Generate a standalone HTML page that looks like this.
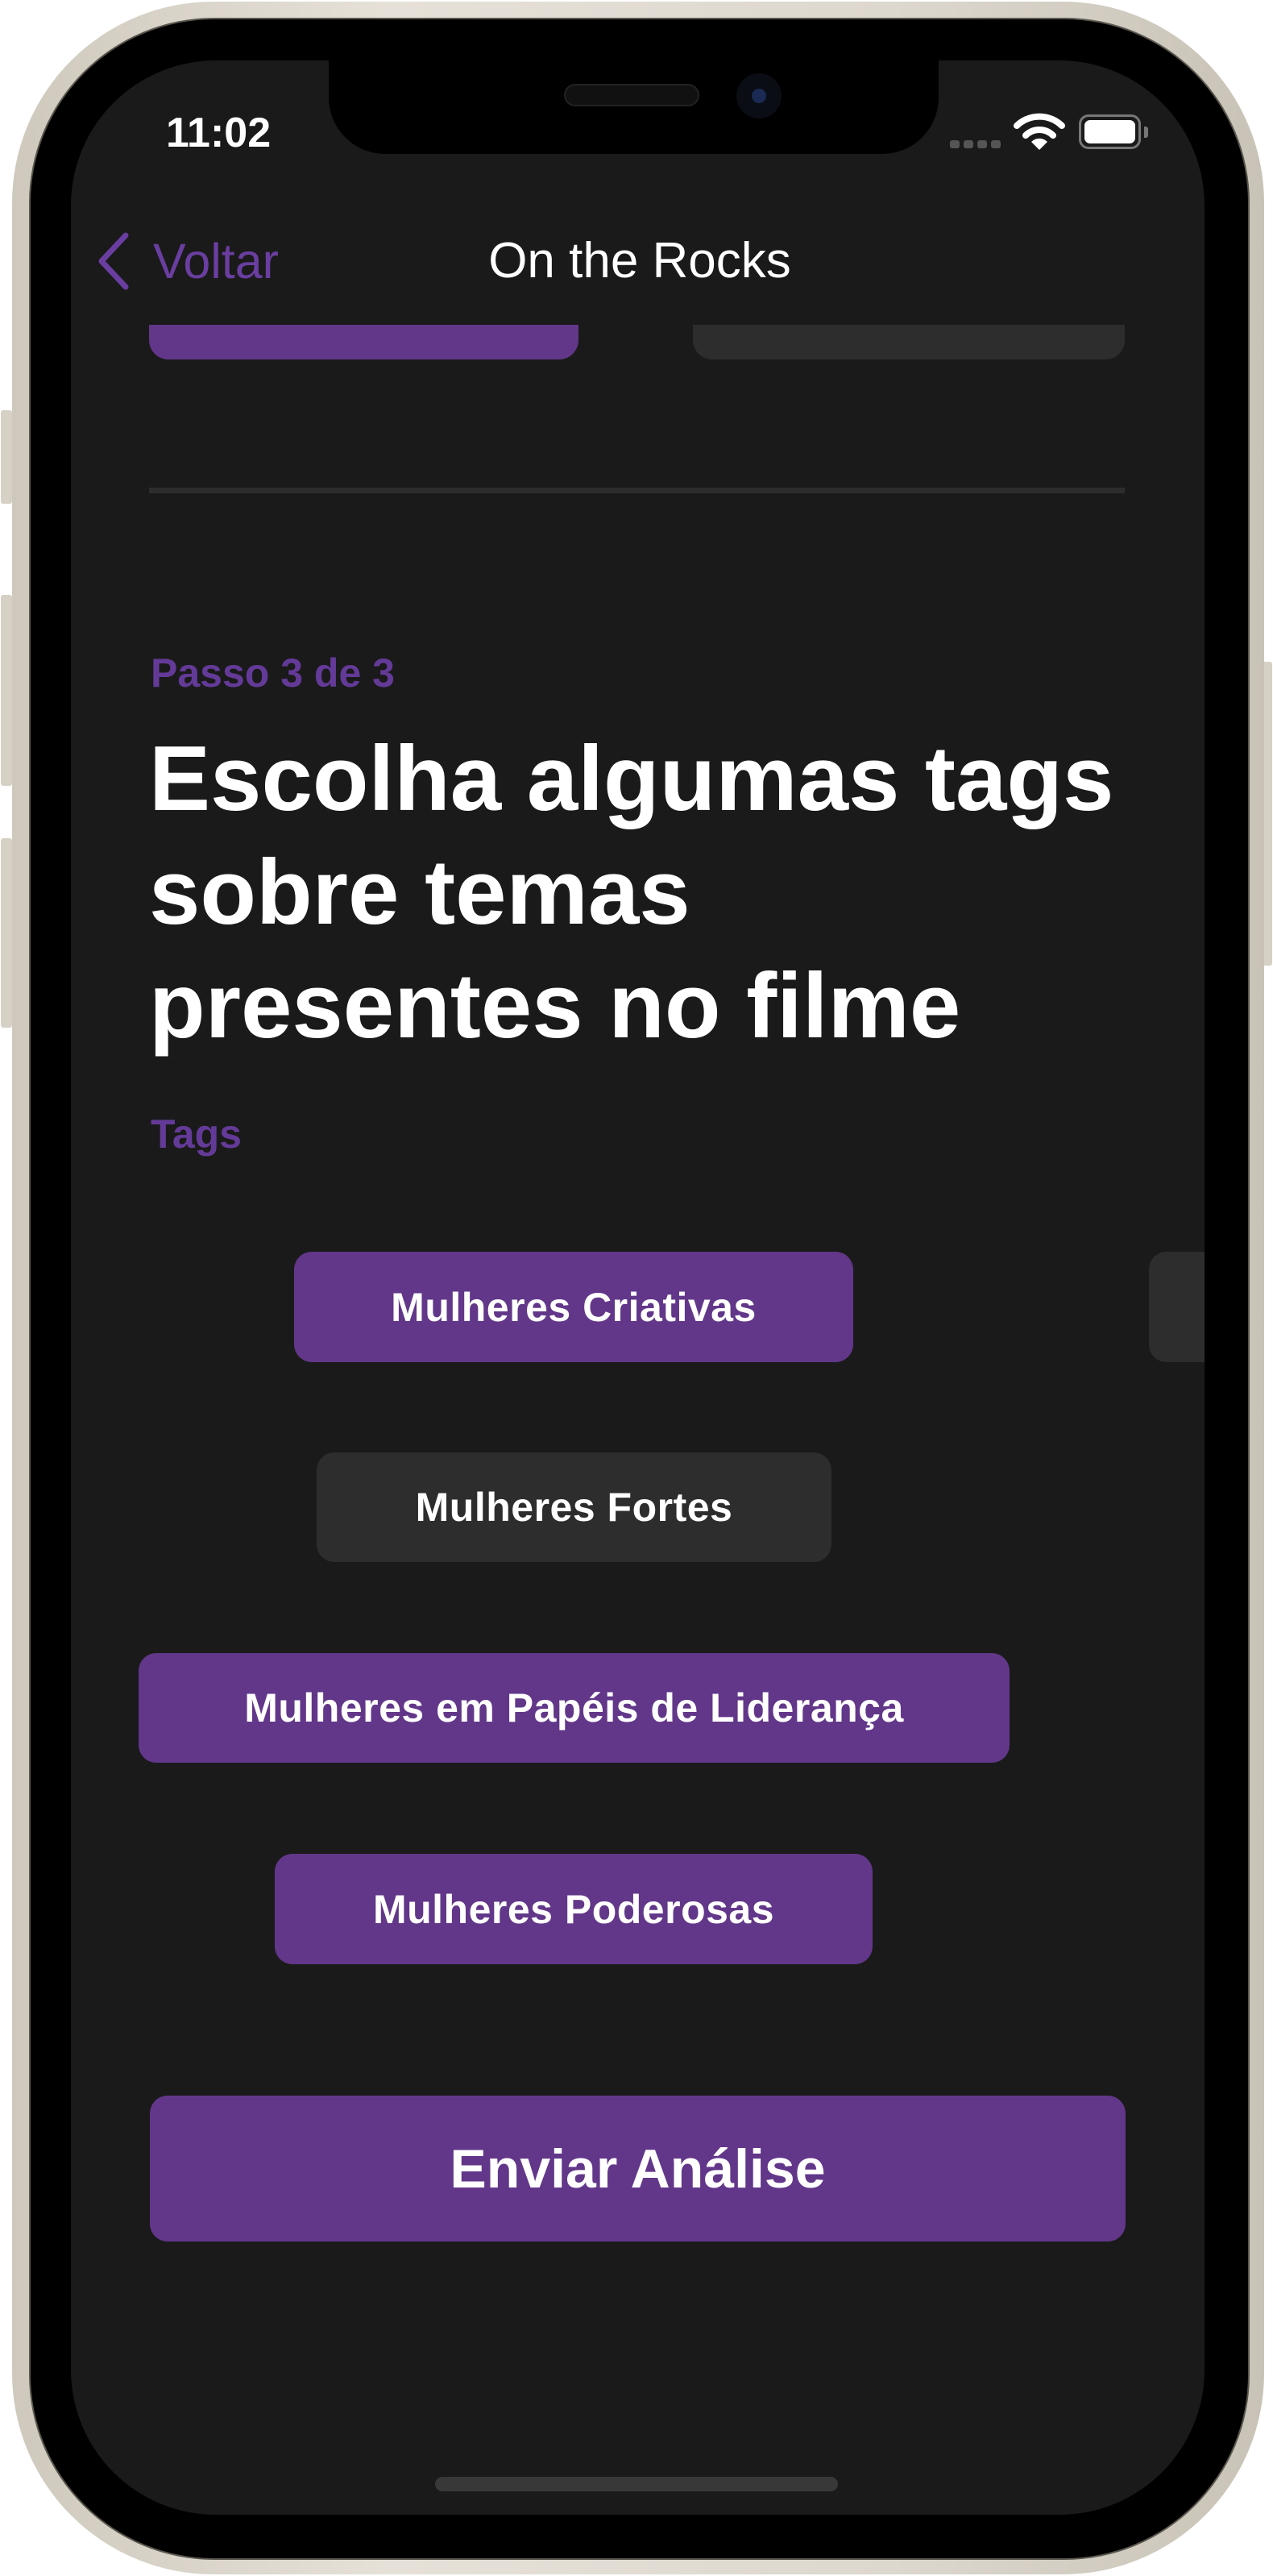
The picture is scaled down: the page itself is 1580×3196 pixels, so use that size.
<!DOCTYPE html>
<html><head><meta charset="utf-8"><style>
*{margin:0;padding:0;box-sizing:border-box}
body{width:1580px;height:3196px;background:#fff;position:relative;overflow:hidden;font-family:"Liberation Sans",sans-serif}
.abs{position:absolute}
.silver{left:15px;top:2px;width:1554px;height:3192px;border-radius:250px;background:linear-gradient(90deg,#cfc9bd,#e6e1d8 30%,#ddd8ce 70%,#c9c3b7)}
.bezel{left:38px;top:24px;width:1511px;height:3150px;border-radius:228px;background:#000;box-shadow:0 0 0 2px #5a574f}
.screen{left:88px;top:75px;width:1407px;height:3045px;border-radius:180px;background:#1a1a1a;overflow:hidden}
.notch{left:408px;top:60px;width:757px;height:131px;background:#000;border-radius:0 0 70px 70px}
.btn{background:#d6d0c5;border-radius:3px}
.chip{position:absolute;display:flex;align-items:center;justify-content:center;color:#fff;font-weight:bold;font-size:50px;letter-spacing:0.5px;border-radius:22px;white-space:nowrap}
.p{background:#623789}.g{background:#2d2d2d}
</style></head><body>
<div class="abs btn" style="left:1px;top:509px;width:14px;height:116px"></div>
<div class="abs btn" style="left:1px;top:738px;width:14px;height:237px"></div>
<div class="abs btn" style="left:1px;top:1040px;width:14px;height:235px"></div>
<div class="abs btn" style="left:1566px;top:821px;width:13px;height:377px"></div>
<div class="abs silver"></div>
<div class="abs bezel"></div>
<div class="abs screen"></div>
<div class="abs notch"></div>
<div class="abs" style="left:700px;top:104px;width:168px;height:28px;border-radius:14px;background:#111;border:2px solid #222"></div>
<div class="abs" style="left:914px;top:91px;width:56px;height:56px;border-radius:50%;background:#0b0d14"></div>
<div class="abs" style="left:933px;top:110px;width:18px;height:18px;border-radius:50%;background:#1b2a55"></div>

<div class="abs" style="left:206px;top:139px;font-size:52px;font-weight:bold;color:#fff;line-height:52px">11:02</div>
<div class="abs" style="left:1179px;top:174px;width:12px;height:10px;border-radius:3px;background:#555"></div>
<div class="abs" style="left:1196px;top:174px;width:12px;height:10px;border-radius:3px;background:#555"></div>
<div class="abs" style="left:1213px;top:174px;width:12px;height:10px;border-radius:3px;background:#555"></div>
<div class="abs" style="left:1230px;top:174px;width:12px;height:10px;border-radius:3px;background:#555"></div>
<svg class="abs" style="left:1258px;top:140px" width="64" height="48" viewBox="0 0 64 48">
<path d="M4 16 A40 40 0 0 1 60 16" stroke="#fff" stroke-width="8" fill="none" stroke-linecap="round"/>
<path d="M15 28 A24 24 0 0 1 49 28" stroke="#fff" stroke-width="8" fill="none" stroke-linecap="round"/>
<path d="M22 36 L32 46 L42 36 A14 14 0 0 0 22 36Z" fill="#fff"/></svg>
<div class="abs" style="left:1339px;top:142px;width:77px;height:43px;border-radius:12px;border:3px solid #777;padding:4px"><div style="width:100%;height:100%;background:#fff;border-radius:7px"></div></div>
<div class="abs" style="left:1420px;top:157px;width:5px;height:14px;border-radius:0 3px 3px 0;background:#777"></div>

<svg class="abs" style="left:118px;top:286px" width="48" height="76" viewBox="0 0 48 76"><path d="M38 6 L8 38 L38 70" stroke="#6a3ea0" stroke-width="7" fill="none" stroke-linecap="round" stroke-linejoin="round"/></svg>
<div class="abs" style="left:190px;top:294px;font-size:61px;color:#6a3ea0;line-height:61px">Voltar</div>
<div class="abs" style="left:0;width:1580px;text-align:center;top:293px;font-size:62px;color:#fff;line-height:62px;padding-left:8px">On the Rocks</div>

<div class="abs p" style="left:185px;top:403px;width:533px;height:43px;border-radius:0 0 24px 24px"></div>
<div class="abs g" style="left:860px;top:403px;width:536px;height:43px;border-radius:0 0 24px 24px"></div>
<div class="abs" style="left:185px;top:605px;width:1211px;height:7px;background:#2d2d2d"></div>

<div class="abs" style="left:187px;top:810px;font-size:50px;line-height:50px;color:#643a98;font-weight:bold">Passo 3 de 3</div>
<div class="abs" style="left:185px;top:896px;font-size:114px;line-height:141px;color:#fff;font-weight:bold;letter-spacing:0;white-space:nowrap">Escolha algumas tags<br>sobre temas<br>presentes no filme</div>
<div class="abs" style="left:187px;top:1382px;font-size:50px;line-height:50px;color:#643a98;font-weight:bold">Tags</div>

<div class="chip p" style="left:365px;top:1553px;width:694px;height:137px">Mulheres Criativas</div>
<div class="chip g" style="left:1426px;top:1553px;width:69px;height:137px;border-radius:22px 0 0 22px"></div>
<div class="chip g" style="left:393px;top:1802px;width:639px;height:136px">Mulheres Fortes</div>
<div class="chip p" style="left:172px;top:2051px;width:1081px;height:136px">Mulheres em Papéis de Liderança</div>
<div class="chip p" style="left:341px;top:2300px;width:742px;height:137px">Mulheres Poderosas</div>

<div class="chip p" style="left:186px;top:2600px;width:1211px;height:181px;font-size:68px;border-radius:22px;letter-spacing:0">Enviar Análise</div>
<div class="abs" style="left:540px;top:3073px;width:500px;height:18px;border-radius:9px;background:#383838"></div>
</body></html>
